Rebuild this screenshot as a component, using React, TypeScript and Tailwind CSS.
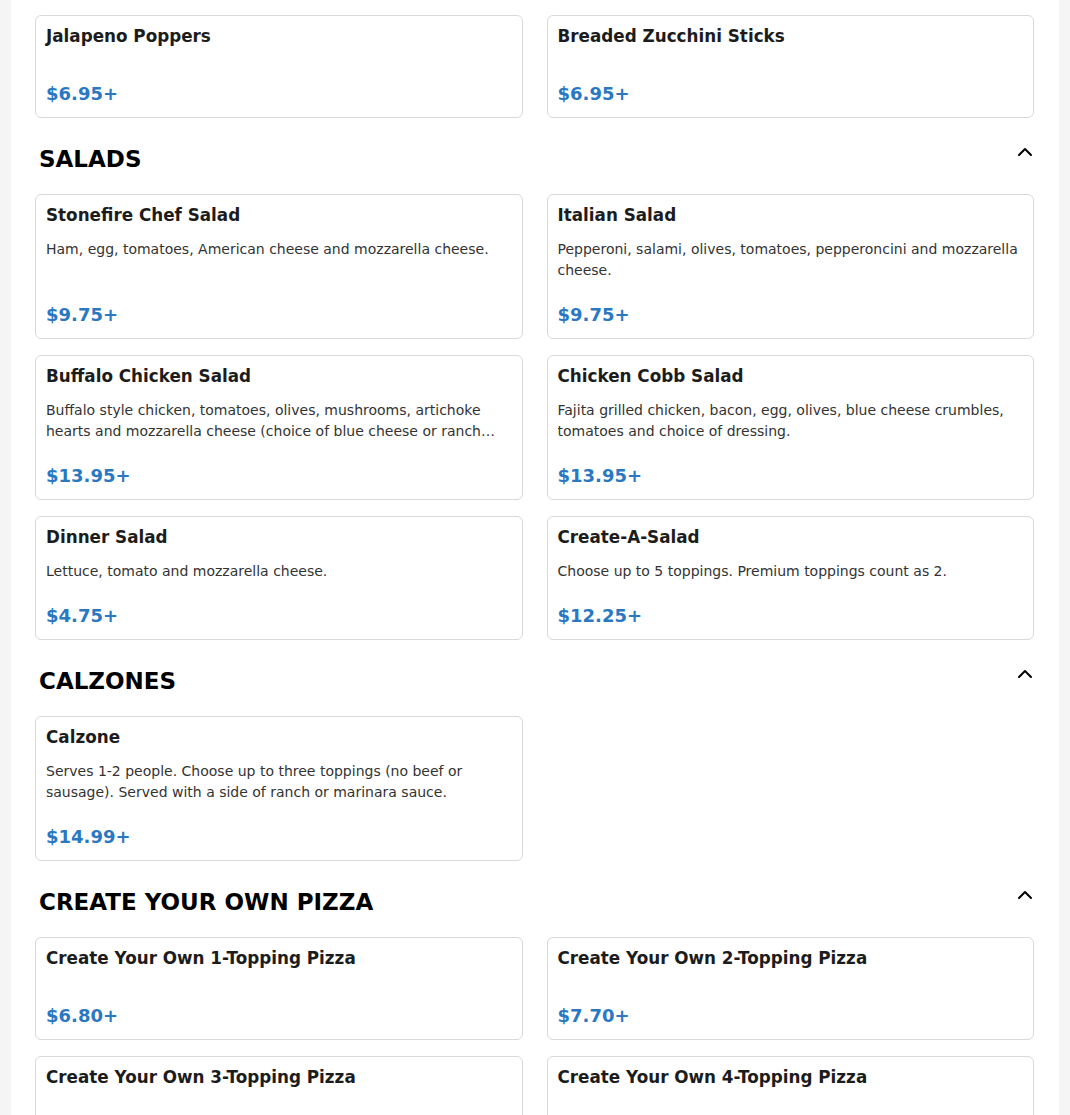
import { ChevronUp } from "lucide-react";

interface Item {
  name: string;
  desc?: string;
  price: string;
}

interface Section {
  title?: string;
  items: Item[];
}

const sections: Section[] = [
  {
    items: [
      { name: "Jalapeno Poppers", price: "$6.95+" },
      { name: "Breaded Zucchini Sticks", price: "$6.95+" },
    ],
  },
  {
    title: "SALADS",
    items: [
      {
        name: "Stonefire Chef Salad",
        desc: "Ham, egg, tomatoes, American cheese and mozzarella cheese.",
        price: "$9.75+",
      },
      {
        name: "Italian Salad",
        desc: "Pepperoni, salami, olives, tomatoes, pepperoncini and mozzarella cheese.",
        price: "$9.75+",
      },
      {
        name: "Buffalo Chicken Salad",
        desc: "Buffalo style chicken, tomatoes, olives, mushrooms, artichoke hearts and mozzarella cheese (choice of blue cheese or ranch dressing).",
        price: "$13.95+",
      },
      {
        name: "Chicken Cobb Salad",
        desc: "Fajita grilled chicken, bacon, egg, olives, blue cheese crumbles, tomatoes and choice of dressing.",
        price: "$13.95+",
      },
      {
        name: "Dinner Salad",
        desc: "Lettuce, tomato and mozzarella cheese.",
        price: "$4.75+",
      },
      {
        name: "Create-A-Salad",
        desc: "Choose up to 5 toppings. Premium toppings count as 2.",
        price: "$12.25+",
      },
    ],
  },
  {
    title: "CALZONES",
    items: [
      {
        name: "Calzone",
        desc: "Serves 1-2 people. Choose up to three toppings (no beef or sausage). Served with a side of ranch or marinara sauce.",
        price: "$14.99+",
      },
    ],
  },
  {
    title: "CREATE YOUR OWN PIZZA",
    items: [
      { name: "Create Your Own 1-Topping Pizza", price: "$6.80+" },
      { name: "Create Your Own 2-Topping Pizza", price: "$7.70+" },
      { name: "Create Your Own 3-Topping Pizza", price: "$8.60+" },
      { name: "Create Your Own 4-Topping Pizza", price: "$9.50+" },
    ],
  },
];

function MenuCard({ item }: { item: Item }) {
  return (
    <div className="flex flex-col rounded-md border border-[#d9d9d9] bg-white p-[10px]">
      <h3 className="text-[16.8px] font-bold leading-5 text-[#1c1c1c]">{item.name}</h3>
      <p className="mt-[14px] line-clamp-2 text-[14px] leading-[21px] text-[#333]">
        {item.desc}
      </p>
      <div className="mt-auto pt-[20px] text-[18px] font-bold leading-[27px] text-[#2b78c2]">
        {item.price}
      </div>
    </div>
  );
}

export default function App() {
  return (
    <div
      className="h-[1115px] overflow-hidden bg-[#f5f5f5]"
      style={{ fontFamily: '"DejaVu Sans", Verdana, sans-serif' }}
    >
      <div className="mx-[11px] min-h-full bg-white pl-6 pr-[25px] pt-[15px]">
        {sections.map((section, i) => (
          <section key={i}>
            {section.title && (
              <div className="flex items-start justify-between pl-1 pt-[25px] pb-[18px]">
                <h2 className="text-[23px] font-bold leading-[33px] text-black">
                  {section.title}
                </h2>
                <ChevronUp className="-mt-[3px] -mr-[3px] h-6 w-6 text-black" strokeWidth={2} />
              </div>
            )}
            <div className="grid grid-cols-2 gap-x-6 gap-y-4">
              {section.items.map((item) => (
                <MenuCard key={item.name} item={item} />
              ))}
            </div>
          </section>
        ))}
      </div>
    </div>
  );
}
